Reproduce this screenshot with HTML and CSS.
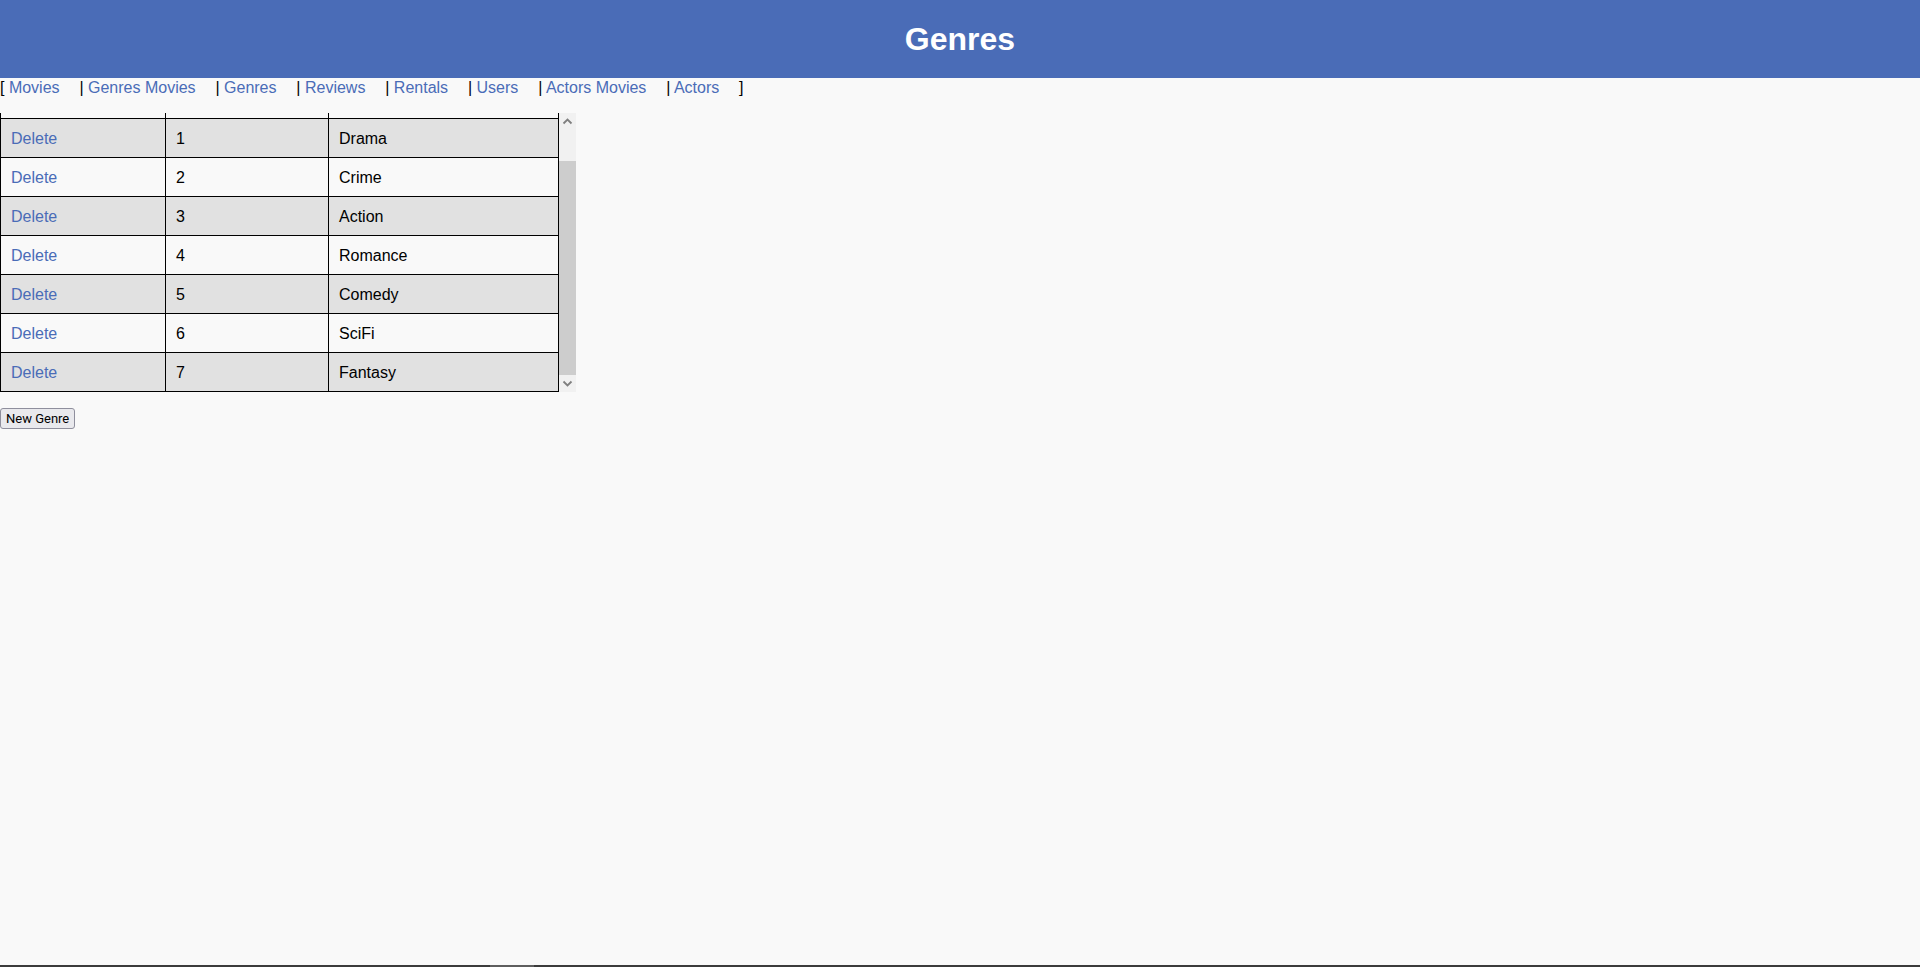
FILE: index.html
```html
<!DOCTYPE html>
<html lang="en">
<head>
<meta charset="utf-8">
<title>Genres</title>
<link rel="stylesheet" href="styles.css">
</head>
<body>
<div class="page">
  <header class="topbar">
    <h1 class="title">Genres</h1>
  </header>
  <nav class="nav">[ <a class="nav-link" href="#">Movies</a> | <a class="nav-link" href="#">Genres Movies</a> | <a class="nav-link" href="#">Genres</a> | <a class="nav-link" href="#">Reviews</a> | <a class="nav-link" href="#">Rentals</a> | <a class="nav-link" href="#">Users</a> | <a class="nav-link" href="#">Actors Movies</a> | <a class="nav-link" href="#">Actors</a> ]</nav>
  <main class="content">
    <div class="table-frame">
      <div class="table-viewport">
        <table class="grid">
          <colgroup>
            <col class="col-action">
            <col class="col-id">
            <col class="col-name">
          </colgroup>
          <thead>
            <tr><th></th><th></th><th></th></tr>
          </thead>
          <tbody>
            <tr><td><a class="row-link" href="#">Delete</a></td><td>1</td><td>Drama</td></tr>
            <tr><td><a class="row-link" href="#">Delete</a></td><td>2</td><td>Crime</td></tr>
            <tr><td><a class="row-link" href="#">Delete</a></td><td>3</td><td>Action</td></tr>
            <tr><td><a class="row-link" href="#">Delete</a></td><td>4</td><td>Romance</td></tr>
            <tr><td><a class="row-link" href="#">Delete</a></td><td>5</td><td>Comedy</td></tr>
            <tr><td><a class="row-link" href="#">Delete</a></td><td>6</td><td>SciFi</td></tr>
            <tr><td><a class="row-link" href="#">Delete</a></td><td>7</td><td>Fantasy</td></tr>
          </tbody>
        </table>
      </div>
      <div class="vscroll" aria-hidden="true">
        <div class="vscroll-btn">
          <svg width="17" height="17" viewBox="0 0 17 17"><path d="M4.5 10.5 L8.5 6.5 L12.5 10.5" fill="none" stroke="#7f7f7f" stroke-width="1.8"/></svg>
        </div>
        <div class="vscroll-track"><div class="vscroll-thumb"></div></div>
        <div class="vscroll-btn">
          <svg width="17" height="17" viewBox="0 0 17 17"><path d="M4.5 6.5 L8.5 10.5 L12.5 6.5" fill="none" stroke="#7f7f7f" stroke-width="1.8"/></svg>
        </div>
      </div>
    </div>
    <div class="actions">
      <button class="btn" type="button">New Genre</button>
    </div>
  </main>
  <div class="statusbar"><span class="statusbar-thumb"></span></div>
</div>
</body>
</html>
```

FILE: styles.css
```css
html, body {
  margin: 0;
  padding: 0;
  background: #f9f9f9;
  overflow: hidden;
}

body {
  font-family: "Liberation Sans", Arial, sans-serif;
  font-size: 16px;
  color: #000;
}

.page {
  height: 100vh;
  display: flex;
  flex-direction: column;
}

.topbar {
  height: 78px;
  background: #4a6cb7;
  display: flex;
  align-items: center;
  justify-content: center;
  flex-shrink: 0;
}

.title {
  margin: 0;
  font-size: 32px;
  font-weight: bold;
  color: #fff;
  line-height: 37px;
  font-family: "Liberation Sans", Arial, sans-serif;
}

.nav {
  height: 19px;
  line-height: 19px;
  white-space: nowrap;
  color: #000;
  flex-shrink: 0;
}

.nav-link {
  color: #4a6cb7;
  text-decoration: none;
  margin-right: 15.4px;
}

.content {
  flex: 1;
  display: flex;
  flex-direction: column;
  align-items: flex-start;
}

.table-frame {
  margin-top: 16px;
  display: flex;
  height: 279px;
}

.table-viewport {
  width: 559px;
  height: 279px;
  overflow: hidden;
  display: flex;
  flex-direction: column-reverse;
}

.vscroll {
  width: 17px;
  display: flex;
  flex-direction: column;
  background: #f1f1f1;
}

.vscroll-btn {
  height: 17px;
  flex-shrink: 0;
  display: flex;
}

.vscroll-track {
  flex: 1;
  display: flex;
  flex-direction: column;
  justify-content: flex-end;
}

.vscroll-thumb {
  height: 214px;
  background: #cdcdcd;
}

.grid {
  flex-shrink: 0;
  border-collapse: collapse;
  table-layout: fixed;
  width: 558px;
}

.col-action { width: 165px; }
.col-id { width: 163px; }
.col-name { width: 230px; }

.grid th,
.grid td {
  border: 1px solid #000;
  text-align: left;
  line-height: 18px;
  font-size: 16px;
}

.grid th {
  padding: 13px 10px 14px;
  font-weight: bold;
}

.grid td {
  padding: 11px 10px 9px;
}

.grid tbody tr:nth-child(odd) {
  background: #e1e1e1;
}

.row-link {
  color: #4a6cb7;
  text-decoration: none;
}

.actions {
  margin-top: 16px;
}

.btn {
  font-family: Roboto, "Noto Sans", sans-serif;
  font-size: 13px;
  height: 21px;
  padding: 0 5px;
  margin: 0;
  border: 1px solid #8f8f9d;
  border-radius: 3px;
  background: #e9e9ed;
  color: #000;
  line-height: 17px;
}

.statusbar {
  height: 2px;
  background: #3b3b3b;
  display: flex;
  flex-shrink: 0;
}

.statusbar-thumb {
  margin-left: 490px;
  width: 44px;
  background: #5e5e5e;
}
```
